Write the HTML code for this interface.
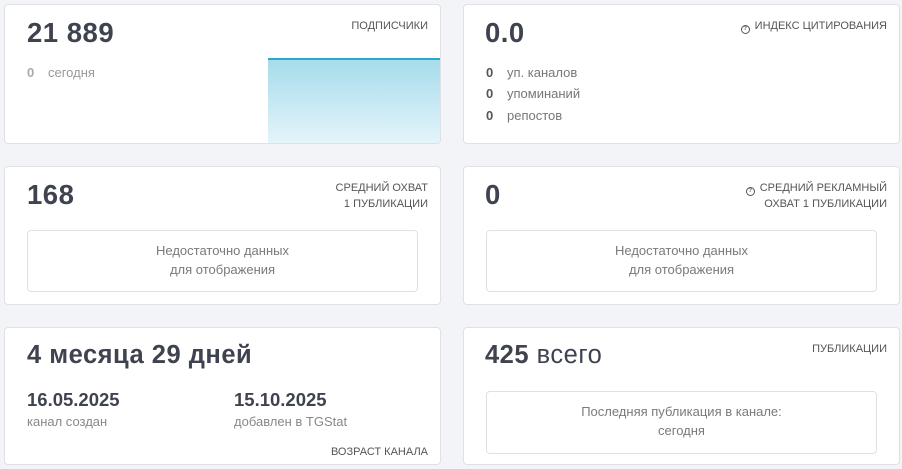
<!DOCTYPE html>
<html><head><meta charset="utf-8"><style>
*{box-sizing:border-box;margin:0;padding:0}
body{width:902px;height:469px;background:#f3f4f8;font-family:"Liberation Sans",sans-serif;position:relative;overflow:hidden;color:#3f4350}
.c{position:absolute;background:#fff;border:1px solid #dfe1e6;border-radius:4px;overflow:hidden}
.big{position:absolute;font-weight:bold;font-size:27.5px;color:#3f4350;letter-spacing:0.5px}
.lab{position:absolute;right:12px;font-size:11px;color:#555;text-align:right;line-height:16px;font-weight:normal}
.row{position:absolute;font-size:13px;color:#777}
.row b{display:inline-block;width:21px;font-weight:bold;color:#555}
.box{position:absolute;left:22px;right:22px;border:1px solid #dfe1e6;border-radius:4px;font-size:13px;color:#7a7a7a;text-align:center;line-height:19px;padding-top:10px}
.q{display:inline-block;width:9px;height:9px;border:1.2px solid #555;border-radius:50%;font-size:6px;line-height:7px;text-align:center;font-weight:bold;vertical-align:-1px;margin-right:5px}
</style></head><body>
<div class="c" style="left:4px;top:4px;width:437px;height:140px">
<div class="big" style="left:22px;top:12px">21 889</div>
<div class="lab" style="top:13px">ПОДПИСЧИКИ</div>
<div class="row" style="left:22px;top:60px;color:#999"><b style="color:#aaa">0</b>сегодня</div>
<div style="position:absolute;left:263px;top:53px;right:0;bottom:0;background:linear-gradient(#a6dceb,#e4f4fa);border-top:2px solid #2aa6cf"></div>
</div>
<div class="c" style="left:463px;top:4px;width:437px;height:140px">
<div class="big" style="left:21px;top:12px">0.0</div>
<div class="lab" style="top:13px"><span class="q">?</span>ИНДЕКС ЦИТИРОВАНИЯ</div>
<div class="row" style="left:22px;top:60px"><b>0</b>уп. каналов</div>
<div class="row" style="left:22px;top:81px"><b>0</b>упоминаний</div>
<div class="row" style="left:22px;top:103px"><b>0</b>репостов</div>
</div>
<div class="c" style="left:4px;top:166px;width:437px;height:139px">
<div class="big" style="left:22px;top:12px">168</div>
<div class="lab" style="top:13px">СРЕДНИЙ ОХВАТ<br>1 ПУБЛИКАЦИИ</div>
<div class="box" style="top:63px;height:62px">Недостаточно данных<br>для отображения</div>
</div>
<div class="c" style="left:463px;top:166px;width:437px;height:139px">
<div class="big" style="left:21px;top:12px">0</div>
<div class="lab" style="top:13px"><span class="q">?</span>СРЕДНИЙ РЕКЛАМНЫЙ<br>ОХВАТ 1 ПУБЛИКАЦИИ</div>
<div class="box" style="top:63px;height:62px">Недостаточно данных<br>для отображения</div>
</div>
<div class="c" style="left:4px;top:327px;width:437px;height:138px">
<div class="big" style="left:22px;top:13px;font-size:25.5px">4 месяца 29 дней</div>
<div style="position:absolute;left:22px;top:61px;font-weight:bold;font-size:18.5px">16.05.2025</div>
<div style="position:absolute;left:22px;top:86px;font-size:13px;color:#888">канал создан</div>
<div style="position:absolute;left:229px;top:61px;font-weight:bold;font-size:18.5px">15.10.2025</div>
<div style="position:absolute;left:229px;top:86px;font-size:13px;color:#888">добавлен в TGStat</div>
<div class="lab" style="top:116px">ВОЗРАСТ КАНАЛА</div>
</div>
<div class="c" style="left:463px;top:327px;width:437px;height:138px">
<div class="big" style="left:21px;top:13px;font-size:25.5px">425 <span style="font-weight:normal">всего</span></div>
<div class="lab" style="top:13px">ПУБЛИКАЦИИ</div>
<div class="box" style="top:63px;height:63px">Последняя публикация в канале:<br>сегодня</div>
</div>
</body></html>
